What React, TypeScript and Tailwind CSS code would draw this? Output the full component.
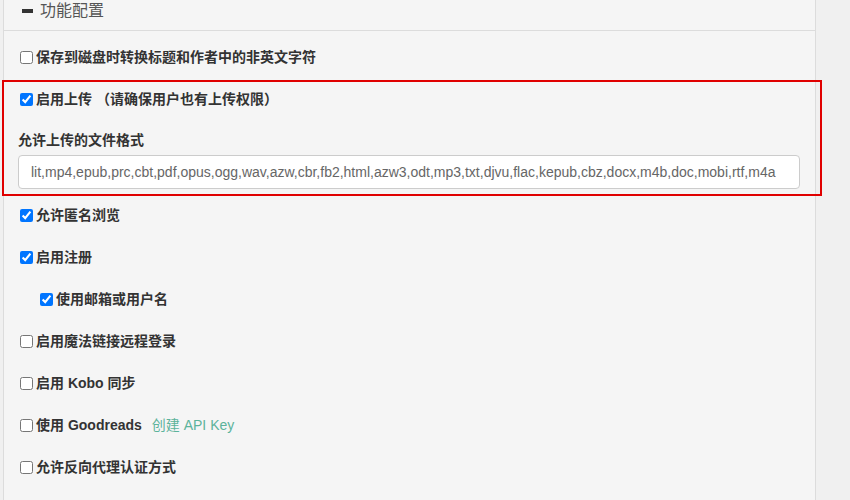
import React from 'react';

const formats =
  'lit,mp4,epub,prc,cbt,pdf,opus,ogg,wav,azw,cbr,fb2,html,azw3,odt,mp3,txt,djvu,flac,kepub,cbz,docx,m4b,doc,mobi,rtf,m4a';

type RowProps = {
  label: React.ReactNode;
  checked?: boolean;
  indent?: boolean;
};

function CheckRow({ label, checked = false, indent = false }: RowProps) {
  return (
    <label className={`flex h-[42px] items-center ${indent ? 'pl-[36px]' : 'pl-[16px]'}`}>
      <input
        type="checkbox"
        defaultChecked={checked}
        className="m-0 mr-[3px] h-[13px] w-[13px] accent-[#0075ff]"
      />
      <span className="text-[14px] font-bold text-[#333]">{label}</span>
    </label>
  );
}

export default function App() {
  return (
    <div
      className="relative h-[500px] w-[850px] overflow-hidden bg-[#f0f0f0]"
      style={{ fontFamily: '"Liberation Sans", "Noto Sans CJK SC", sans-serif' }}
    >
      <div className="ml-[3px] h-full w-[813px] border-x border-[#dcdcdc] bg-[#f5f5f5]">
        <div className="flex h-[31px] items-start border-b border-[#dcdcdc] pl-[18px]">
          <div className="flex h-[22px] items-center gap-[7px]">
            <span className="block h-[4px] w-[11px] bg-[#333]" />
            <span className="text-[16px] text-[#555]">功能配置</span>
          </div>
        </div>

        <div className="pt-[5px]">
          <CheckRow label="保存到磁盘时转换标题和作者中的非英文字符" />
          <CheckRow label="启用上传 （请确保用户也有上传权限）" checked />
          <div className="pl-[14px]">
            <div className="flex h-[35px] items-center pt-[5px] text-[14px] font-bold text-[#333]">
              允许上传的文件格式
            </div>
            <input
              type="text"
              readOnly
              value={formats}
              className="block h-[34px] w-[782px] rounded-[4px] border border-[#ccc] bg-white px-[12px] text-[14px] text-[#666] outline-none"
            />
          </div>
          <div className="h-[5px]" />
          <CheckRow label="允许匿名浏览" checked />
          <CheckRow label="启用注册" checked />
          <CheckRow label="使用邮箱或用户名" checked indent />
          <CheckRow label="启用魔法链接远程登录" />
          <CheckRow label="启用 Kobo 同步" />
          <CheckRow
            label={
              <>
                使用 Goodreads
                <a className="ml-[10px] font-normal text-[#5cb39b]">创建 API Key</a>
              </>
            }
          />
          <CheckRow label="允许反向代理认证方式" />
        </div>
      </div>

      <div className="absolute left-[2px] top-[80px] h-[116px] w-[820px] border-2 border-[#e00000]" />
    </div>
  );
}
